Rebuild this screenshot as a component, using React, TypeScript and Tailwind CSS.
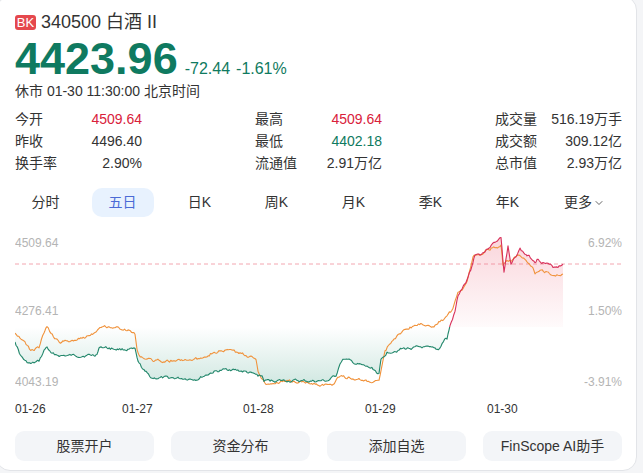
import React from "react";
import { ChevronDown } from "lucide-react";

type P = [number, number];

const mainPts: P[] = [
  [15, 342], [20.5, 356.7], [26, 363], [30.7, 365], [35, 364], [39, 362.3], [44, 352], [47, 347.7], [51, 355],
  [61.5, 356.7], [82, 356.7], [94, 356], [97, 355], [100, 347.7], [115, 350], [135, 350.7], [137, 360],
  [139, 365], [145, 373], [152, 379], [172, 379], [197, 380], [213, 373], [229.5, 370], [246, 373],
  [258, 376.7], [262, 377], [264, 381.7], [287, 381.7], [311.5, 382.3], [328, 381.7], [336, 376.7],
  [340, 364], [344, 360], [356.5, 365], [373, 370], [379, 375], [381, 361.7], [387, 353.3], [401.6, 350],
  [422, 348.3], [438.5, 351], [444.7, 340], [447, 340], [450, 327], [455, 313], [458, 297], [462, 290],
  [467, 282], [472, 267], [475, 255], [480, 255], [485, 252], [490, 247], [495, 243], [501, 238],
  [503, 262], [504, 273], [506, 260], [508, 248], [511, 267], [515, 258], [520, 250], [525, 255],
  [528, 257], [535, 262], [537, 260], [543, 263], [553, 268], [558, 267], [563, 265],
];

const orangePts: P[] = [
  [15, 333.3], [22.5, 340], [30.7, 351.7], [39, 348.3], [44, 334], [47, 326.7], [51, 335], [59.4, 343.3],
  [69.7, 341.7], [82, 339.3], [95, 333], [100, 326.7], [115, 328.3], [127, 331], [135, 335], [137, 350],
  [139, 356.7], [152, 361.7], [172, 361.7], [197, 360], [213, 353.3], [229.5, 351], [246, 356.7],
  [256, 360], [258, 371.7], [266, 385], [287, 381.7], [311.5, 384.3], [332, 386.7], [340, 376.7],
  [356.5, 380], [373, 384.3], [379, 381.7], [385, 351.7], [393, 340], [410, 328.3], [422, 325],
  [434, 328.3], [440, 322], [447, 318], [453, 310], [458, 292], [462, 290], [467, 282], [473, 257],
  [480, 255], [490, 250], [495, 248], [501, 247], [503, 267], [507, 263], [512, 262], [517, 257],
  [520, 258], [527, 263], [533, 270], [535, 275], [540, 272], [547, 273], [553, 278], [558, 277],
  [563, 275],
];

function build(pts: P[], seed: number, amp: number): P[] {
  const out: P[] = [];
  let s = seed;
  const rnd = () => {
    s = (s * 9301 + 49297) % 233280;
    return s / 233280;
  };
  let v = 0;
  for (let i = 0; i < pts.length - 1; i++) {
    const [x0, y0] = pts[i];
    const [x1, y1] = pts[i + 1];
    const n = Math.max(1, Math.round((x1 - x0) / 1.2));
    for (let k = 0; k < n; k++) {
      const t = k / n;
      v = v * 0.6 + (rnd() - 0.5) * amp;
      out.push([x0 + (x1 - x0) * t, y0 + (y1 - y0) * t + v]);
    }
  }
  out.push(pts[pts.length - 1]);
  return out;
}

const toPath = (p: P[]) => p.map((q, i) => `${i ? "L" : "M"}${q[0].toFixed(1)},${q[1].toFixed(1)}`).join("");

const BASE = 328;

function Chart() {
  const main = build(mainPts, 17, 2.4);
  const orange = build(orangePts, 91, 2.4);
  const mainD = toPath(main);
  const areaD = mainD + `L563,${BASE}L15,${BASE}Z`;
  const font = "'Liberation Sans', Arial, sans-serif";
  return (
    <svg width={607} height={192} viewBox="15 230 607 192" className="block">
      <defs>
        <linearGradient id="rg" x1="0" y1="238" x2="0" y2={BASE + 4} gradientUnits="userSpaceOnUse">
          <stop offset="0" stopColor="#ee6b80" stopOpacity="0.28" />
          <stop offset="1" stopColor="#ee6b80" stopOpacity="0.02" />
        </linearGradient>
        <linearGradient id="gg" x1="0" y1={BASE} x2="0" y2="386" gradientUnits="userSpaceOnUse">
          <stop offset="0" stopColor="#2a9478" stopOpacity="0" />
          <stop offset="1" stopColor="#2a9478" stopOpacity="0.22" />
        </linearGradient>
        <clipPath id="top">
          <rect x="0" y="0" width="700" height={BASE} />
        </clipPath>
        <clipPath id="bot">
          <rect x="0" y={BASE} width="700" height="300" />
        </clipPath>
      </defs>
      <line x1="15" x2="622" y1="265" y2="265" stroke="#f3a6b0" strokeWidth="1" strokeDasharray="4 3" />
      <path d={areaD} fill="url(#rg)" clipPath="url(#top)" />
      <path d={areaD} fill="url(#gg)" clipPath="url(#bot)" />
      <path d={toPath(orange)} fill="none" stroke="#f0923b" strokeWidth="1.1" strokeLinejoin="round" />
      <path d={mainD} fill="none" stroke="#d8305a" strokeWidth="1.1" strokeLinejoin="round" clipPath="url(#top)" />
      <path d={mainD} fill="none" stroke="#22876b" strokeWidth="1.1" strokeLinejoin="round" clipPath="url(#bot)" />
      <g fontFamily={font} fontSize="12" fill="#b4b4b4">
        <text x="15" y="248">4509.64</text>
        <text x="15" y="316">4276.41</text>
        <text x="15" y="387">4043.19</text>
        <text x="622" y="248" textAnchor="end">6.92%</text>
        <text x="622" y="316" textAnchor="end">1.50%</text>
        <text x="622" y="387" textAnchor="end">-3.91%</text>
      </g>
      <g fontFamily={font} fontSize="12" fill="#333333">
        <text x="15" y="414">01-26</text>
        <text x="122" y="414">01-27</text>
        <text x="243" y="414">01-28</text>
        <text x="365" y="414">01-29</text>
        <text x="487" y="414">01-30</text>
      </g>
    </svg>
  );
}

function Stat({ label, value, color }: { label: string; value: string; color?: string }) {
  return (
    <div className="flex h-[22px] w-[127px] items-center justify-between">
      <span className="text-[#333]">{label}</span>
      <span className={color ?? "text-[#333]"}>{value}</span>
    </div>
  );
}

export default function App() {
  const tabs = ["分时", "五日", "日K", "周K", "月K", "季K", "年K"];
  return (
    <div
      className="h-[473px] w-[643px] overflow-hidden bg-[#f4f5f7]"
      style={{ fontFamily: "'Liberation Sans', Arial, 'Noto Sans CJK SC', sans-serif" }}
    >
      <div className="ml-[-4px] mt-[-4px] h-[475px] w-[641px] rounded-[14px] border border-[#e2e4e8] bg-white pl-[18px] pr-[14px] pt-[14px]">
        {/* title */}
        <div className="flex h-[22px] items-center">
          <span className="flex h-[15px] w-[21px] items-center justify-center rounded-[3px] bg-[#e5484d] text-[13px] leading-none text-white">
            BK
          </span>
          <span className="ml-[5px] text-[18px] leading-none text-[#333]">340500 白酒 II</span>
        </div>
        {/* price */}
        <div className="mt-[4px] flex h-[44px] items-baseline">
          <span className="text-[45px] font-bold leading-[44px] text-[#0f7a60]">4423.96</span>
          <span className="ml-[7px] text-[16px] text-[#0f7a60]">-72.44</span>
          <span className="ml-[6px] text-[16px] text-[#0f7a60]">-1.61%</span>
        </div>
        <div className="flex h-[20px] items-center text-[14px] text-[#333]">休市 01-30 11:30:00 北京时间</div>
        {/* stats */}
        <div className="mt-[7px] text-[14px]">
          <div className="flex justify-between">
            <Stat label="今开" value="4509.64" color="text-[#d9213b]" />
            <Stat label="最高" value="4509.64" color="text-[#d9213b]" />
            <Stat label="成交量" value="516.19万手" />
          </div>
          <div className="flex justify-between">
            <Stat label="昨收" value="4496.40" />
            <Stat label="最低" value="4402.18" color="text-[#0f7a60]" />
            <Stat label="成交额" value="309.12亿" />
          </div>
          <div className="flex justify-between">
            <Stat label="换手率" value="2.90%" />
            <Stat label="流通值" value="2.91万亿" />
            <Stat label="总市值" value="2.93万亿" />
          </div>
        </div>
        {/* tabs */}
        <div className="ml-[-8px] mt-[14px] grid w-[616px] grid-cols-8 text-[14px] text-[#333]">
          {tabs.map((t, i) => (
            <div key={t} className="flex h-[29px] items-center justify-center">
              {i === 1 ? (
                <span className="flex h-[29px] w-[62px] items-center justify-center rounded-[10px] bg-[#e8f2fe] text-[#4b6bd6]">
                  {t}
                </span>
              ) : (
                <span>{t}</span>
              )}
            </div>
          ))}
          <div className="flex h-[29px] items-center justify-center">
            <span>更多</span>
            <ChevronDown size={12} strokeWidth={1.8} className="ml-[1px] text-[#555]" />
          </div>
        </div>
        {/* chart */}
        <div className="mt-[12px]">
          <Chart />
        </div>
        {/* buttons */}
        <div className="mt-[10px] grid w-[607px] grid-cols-4 gap-[17px] text-[14px] text-[#333]">
          {["股票开户", "资金分布", "添加自选", "FinScope AI助手"].map((b) => (
            <div key={b} className="flex h-[30px] items-center justify-center rounded-[9px] bg-[#f3f5f8]">
              {b}
            </div>
          ))}
        </div>
      </div>
    </div>
  );
}
